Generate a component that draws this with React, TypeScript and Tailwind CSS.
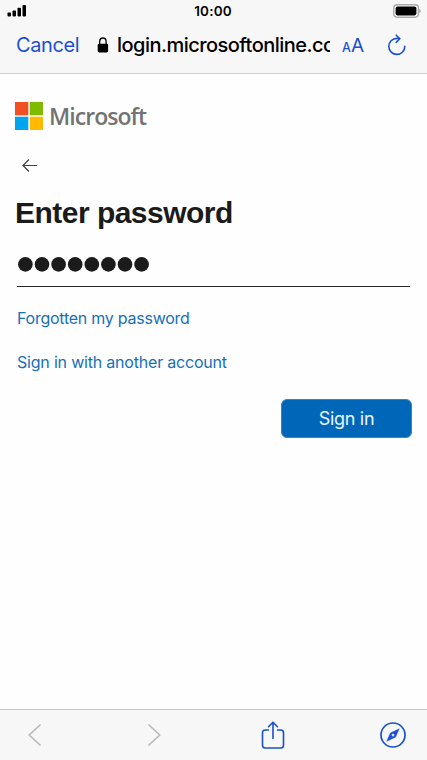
const links = [
  { label: "Forgotten my password", tracking: "tracking-[-0.25px]" },
  { label: "Sign in with another account", tracking: "tracking-[-0.2px]" },
];

function StatusBar() {
  return (
    <div className="grid h-[23px] grid-cols-3 items-center pl-[7px] pr-[6px]">
      <svg width="20" height="13" viewBox="0 0 20 13" className="-mt-[3px]">
        <rect x="0.5" y="8.400" width="3.500" height="4" rx="0.8" />
        <rect x="5.500" y="6.400" width="3.500" height="6" rx="0.8" />
        <rect x="10.500" y="3.800" width="3.500" height="8.600" rx="0.8" />
        <rect x="15.500" y="1" width="3.500" height="11.400" rx="0.8" />
      </svg>
      <span className="pr-[2px] text-center text-[13.5px] font-semibold leading-none tracking-[0.2px]">10:00</span>
      <svg width="28" height="14" viewBox="0 0 28 14" className="-mt-px justify-self-end">
        <rect x="0.8" y="0.8" width="24.6" height="12.4" rx="3.4" fill="#fff" stroke="#aaa8aa" strokeWidth="1.4" />
        <rect x="2.600" y="2.600" width="20.800" height="8.800" rx="1.800" />
        <path d="M26.200 5v4.200c1-.3 1.500-1.100 1.500-2.100S27.200 5.300 26.200 5Z" fill="#aaa8aa" />
      </svg>
    </div>
  );
}

function AddressBar() {
  return (
    <div className="flex h-[44px] items-center pl-[16px] text-[20px]">
      <button className="w-[81px] text-left leading-none tracking-[-0.4px] text-[#1a50cf]">Cancel</button>
      <svg width="12" height="16" viewBox="0 0 12 16" className="shrink-0">
        <rect x="0.7" y="6.8" width="10.400" height="8.600" rx="1.400" />
        <path d="M2.700 7.500V4.400a3.200 3.400 0 0 1 6.400 0v3.100" fill="none" stroke="#000" strokeWidth="1.300" />
      </svg>
      <div className="ml-[8px] w-[213px] overflow-hidden whitespace-nowrap font-medium leading-[28px] tracking-[-0.54px]">
        login.microsoftonline.com
      </div>
      <button className="ml-[12px] flex w-[22px] items-baseline text-[#1a50cf]">
        <span className="text-[12.5px] font-medium leading-none">A</span>
        <span className="text-[19px] leading-none">A</span>
      </button>
      <svg width="20" height="22" viewBox="0 0 20 22" className="ml-[23px]" fill="none" stroke="#1a50cf" strokeWidth="1.600" strokeLinecap="round" strokeLinejoin="round">
        <path d="M12.400 4.600C11.600 4.400 10.600 4.300 9.800 4.400A8 8 0 1 0 17.800 12.200" />
        <path d="M9.200 1.200L12.800 4.800L9.200 8.400" />
      </svg>
    </div>
  );
}

function Logo() {
  return (
    <div className="flex items-center">
      <svg width="28" height="28" viewBox="0 0 28 28">
        <path d="M0 0h13.300v13.300H0z" fill="#f25022" />
        <path d="M14.700 0H28v13.300H14.700z" fill="#7fba00" />
        <path d="M0 14.700h13.300V28H0z" fill="#00a4ef" />
        <path d="M14.700 14.700H28V28H14.700z" fill="#ffb900" />
      </svg>
      <span className="ml-[6px] font-['Open_Sans'] text-[23px] font-semibold leading-[28px] tracking-[-0.95px] text-[#737373]">
        Microsoft
      </span>
    </div>
  );
}

function Toolbar() {
  return (
    <footer className="flex h-[51px] items-center justify-between border-t border-[#c8c8c8] bg-[#f7f7f7] px-[21px]">
      <svg width="26" height="22" viewBox="0 0 26 22" fill="none" stroke="#b9b9b9" strokeWidth="1.700" strokeLinecap="round" strokeLinejoin="round">
        <path d="M19 1L8.200 11L19 21" />
      </svg>
      <svg width="26" height="22" viewBox="0 0 26 22" fill="none" stroke="#b9b9b9" strokeWidth="1.700" strokeLinecap="round" strokeLinejoin="round">
        <path d="M8 1L18.800 11L8 21" />
      </svg>
      <svg width="26" height="28" viewBox="-1 0.5 26 28" fill="none" stroke="#1a50cf" strokeWidth="1.600" strokeLinecap="round" strokeLinejoin="round">
        <path d="M7.500 9.500H4.200Q1.500 9.500 1.500 12.200V24.800Q1.500 27.500 4.200 27.500H19.800Q22.500 27.500 22.500 24.800V12.200Q22.500 9.500 19.800 9.500H16.500" />
        <path d="M12 18V2M7.500 6.200L12 1.700L16.500 6.200" />
      </svg>
      <svg width="26" height="26" viewBox="0 0 26 26">
        <circle cx="13" cy="13" r="12" fill="none" stroke="#1a50cf" strokeWidth="1.700" />
        <path fill="#1a50cf" stroke="#1a50cf" strokeWidth="0.500" strokeLinejoin="round" fillRule="evenodd" d="M19.200 6.800L15.600 15L6.800 19.200L10.400 11ZM13 11.500a1.500 1.500 0 1 0 0 3a1.500 1.500 0 1 0 0-3Z" />
      </svg>
    </footer>
  );
}

export default function App() {
  return (
    <div className="flex h-[760px] w-[427px] flex-col overflow-hidden bg-[#fefefe] font-['Inter',sans-serif] text-black">
      <header className="h-[74px] shrink-0 border-b border-[#cfcfcf] bg-[#f7f7f7]">
        <StatusBar />
        <AddressBar />
      </header>

      <main className="flex flex-1 flex-col items-start px-[15px] pt-[28px]">
        <Logo />
        <svg width="16" height="14" viewBox="0 0 16 14" className="ml-[7px] mt-[28px]" fill="none" stroke="#404040" strokeWidth="1.200">
          <path d="M15 7.500H1M7 1.500L1 7.500L7 13.500" />
        </svg>
        <h1 className="mt-[22px] font-['Liberation_Sans'] text-[30px] font-bold leading-[38px] tracking-[-0.52px] text-[#1b1b1b]">
          Enter password
        </h1>
        <div className="ml-[2px] mt-[14px] flex h-[41px] w-[393px] border-b border-[#262626] pl-px pt-[11px]">
          <svg width="132" height="15" viewBox="0 0 132 15" fill="#1b1b1b">
            {Array.from({ length: 8 }, (_, i) => (
              <circle key={i} cx={7.4 + i * 16.6} cy="7.400" r="7.300" />
            ))}
          </svg>
        </div>
        <div className="ml-[2px] mt-[19px] flex flex-col gap-[20px]">
          {links.map(({ label, tracking }) => (
            <a key={label} href="#" className={`text-[16px] leading-[24px] text-[#1570b8] ${tracking}`}>
              {label}
            </a>
          ))}
        </div>
        <button className="mt-[25px] h-[38.500px] w-[131px] self-end rounded-[6px] border border-[#2f86cc] bg-[#0067b8] text-[18px] tracking-[-0.3px] text-[#eaf6ff]">
          Sign in
        </button>
      </main>

      <Toolbar />
    </div>
  );
}
